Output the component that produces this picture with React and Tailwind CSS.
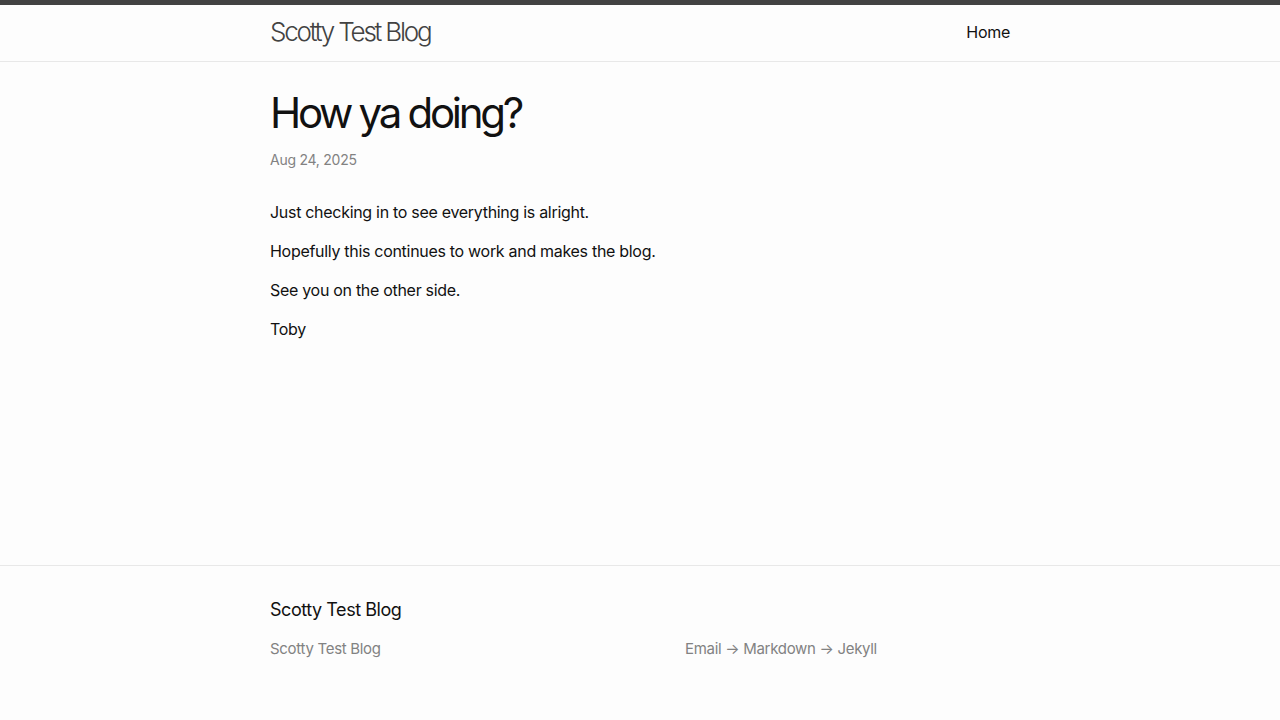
import React from 'react';

const App = () => {
    return (
        <div
            className="min-h-screen flex flex-col bg-[#fdfdfd] text-[#111111] text-[16px] leading-[1.5] tracking-[-0.3px]"
            style={{ fontFamily: 'Inter, "Noto Sans", "Liberation Sans", sans-serif' }}
        >
            <header className="border-t-[5px] border-t-[#424242] border-b border-b-[#e8e8e8] min-h-[61.95px]">
                <div className="w-[740px] mx-auto flex justify-between">
                    <a href="#" className="text-[26px] font-light tracking-[-2.2px] leading-[54px] text-[#424242]">
                        Scotty Test Blog
                    </a>
                    <nav className="leading-[54px]">
                        <a href="#" className="text-[#111111]">
                            Home
                        </a>
                    </nav>
                </div>
            </header>

            <main className="flex-1 py-[30px]">
                <article className="w-[740px] mx-auto">
                    <header className="mb-[30px]">
                        <h1 className="text-[42px] leading-none tracking-[-3.3px] mb-[15px]">How ya doing?</h1>
                        <p className="text-[14px] tracking-[-0.25px] text-[#828282]">Aug 24, 2025</p>
                    </header>
                    <div>
                        <p className="mb-[15px]">Just checking in to see everything is alright.</p>
                        <p className="mb-[15px]">Hopefully this continues to work and makes the blog.</p>
                        <p className="mb-[15px]">See you on the other side.</p>
                        <p className="mb-[15px]">Toby</p>
                    </div>
                </article>
            </main>

            <footer className="border-t border-t-[#e8e8e8] pt-[30px] pb-[60px]">
                <div className="w-[740px] mx-auto">
                    <h2 className="text-[18px] leading-[27px] tracking-[-0.45px] mb-[15px]">Scotty Test Blog</h2>
                    <div className="flex text-[15px] leading-[22.5px] tracking-[-0.3px] text-[#828282]">
                        <div className="w-[415px]">Scotty Test Blog</div>
                        <div>Email → Markdown → Jekyll</div>
                    </div>
                </div>
            </footer>
        </div>
    );
};

export default App;
